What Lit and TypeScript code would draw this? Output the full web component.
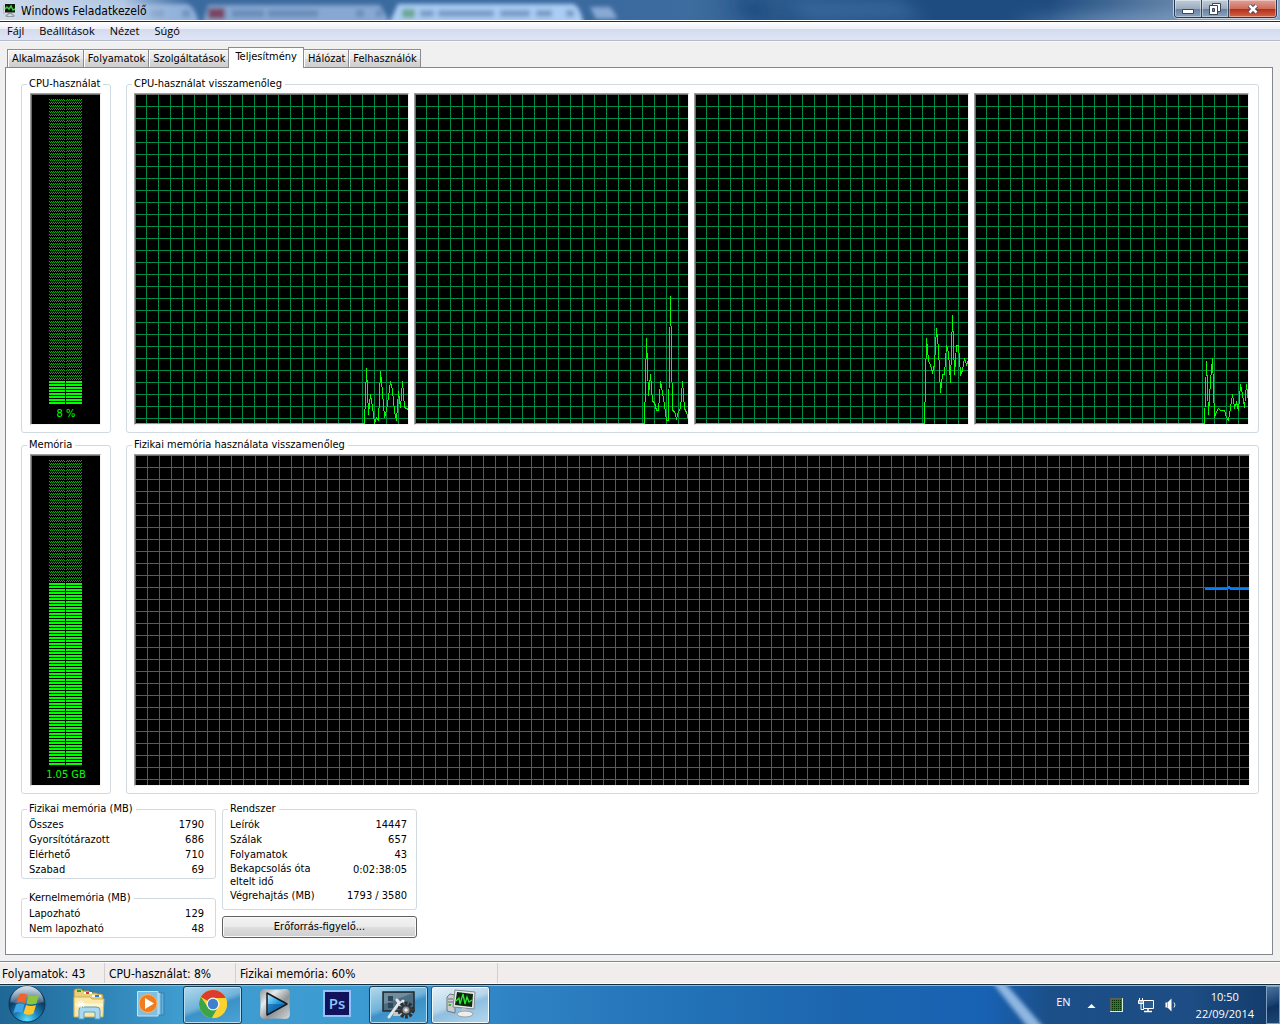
import { LitElement, html, css, svg } from "lit";
import { customElement, property, state } from "lit/decorators.js";
import { classMap } from "lit/directives/class-map.js";

const TABS = [
  "Alkalmazások",
  "Folyamatok",
  "Szolgáltatások",
  "Teljesítmény",
  "Hálózat",
  "Felhasználók",
];

// one sample every two pixels, newest at the right edge
const CPU_HISTORY = [
  [1, 56, 10, 30, 18, 1, 7, 4, 53, 32, 7, 14, 28, 43, 34, 13, 4, 33, 17, 43, 17, 16, 15],
  [1, 86, 29, 50, 23, 22, 14, 14, 43, 32, 20, 4, 4, 128, 14, 13, 6, 13, 16, 43, 16, 12, 5],
  [1, 86, 64, 59, 52, 60, 96, 76, 32, 50, 50, 79, 72, 42, 109, 50, 79, 79, 50, 54, 66, 60, 64],
  [1, 63, 10, 44, 66, 7, 13, 16, 14, 14, 14, 7, 4, 17, 30, 17, 22, 14, 40, 30, 17, 40, 22],
];

const MEMORY_HISTORY = [
  196, 196, 196, 196, 196, 196, 196, 196, 196, 196, 196, 196, 198, 196, 196, 196,
  196, 196, 196, 196, 196, 196, 196,
];

const PHYSICAL = [
  ["Összes", "1790"],
  ["Gyorsítótárazott", "686"],
  ["Elérhető", "710"],
  ["Szabad", "69"],
];

const KERNEL = [
  ["Lapozható", "129"],
  ["Nem lapozható", "48"],
];

const SYSTEM = [
  ["Leírók", "14447"],
  ["Szálak", "657"],
  ["Folyamatok", "43"],
  ["Bekapcsolás óta eltelt idő", "0:02:38:05"],
  ["Végrehajtás (MB)", "1793 / 3580"],
];

@customElement("history-chart")
export class HistoryChart extends LitElement {
  static styles = css`
    :host {
      display: flex;
      min-width: 0;
      background: #000;
      border: 1px solid;
      border-color: #a0a0a0 #f4f4f4 #f4f4f4 #a0a0a0;
    }
    svg.plot {
      flex: 1;
      width: 100%;
      min-width: 0;
      border: solid #696969;
      border-width: 1px 0 0 1px;
      shape-rendering: crispEdges;
    }
    .cpu {
      fill: none;
      stroke: #00ff00;
    }
    .memory {
      fill: none;
      stroke: #0080ff;
      stroke-width: 2;
    }
  `;

  @property({ type: Array }) samples: number[] = [];
  @property() kind = "cpu";
  @property({ type: Number }) shift = 10;
  @property() label = "";

  get points() {
    const n = this.samples.length;
    const half = this.kind === "cpu" ? 0.5 : 0;
    const points = this.samples.map(
      (v, i) => `${(i - n + 1) * 2 + half},${half - v}`
    );
    if (this.kind === "cpu") points.unshift(`-4000,${-half}`);
    return points.join(" ");
  }

  render() {
    return html`
      <svg class="plot" role="img" aria-label=${this.label}>
        <defs>
          <pattern
            id="grid"
            x=${this.shift}
            y="11"
            width="12"
            height="12"
            patternUnits="userSpaceOnUse"
          >
            <path d="M0 0H12V1H1V12H0Z" fill="#008c46" />
          </pattern>
        </defs>
        <rect width="100%" height="100%" fill="url(#grid)" />
        <svg x="100%" y="100%" width="1" height="1" overflow="visible">
          <polyline class=${this.kind} points=${this.points} />
        </svg>
      </svg>
    `;
  }
}

@customElement("level-meter")
export class LevelMeter extends LitElement {
  static styles = css`
    :host {
      display: flex;
      flex-direction: column;
      align-items: center;
      background: #000;
      border: 1px solid;
      border-color: #a0a0a0 #f4f4f4 #f4f4f4 #a0a0a0;
      box-shadow: inset 1px 1px #696969;
      padding: 5px 0 0 1px;
    }
    svg {
      width: 34px;
      height: 306px;
      shape-rendering: crispEdges;
    }
    span {
      color: #00ff00;
      font-size: 11px;
      line-height: 18px;
    }
  `;

  static bars = 102;

  @property({ type: Number }) lit = 0;
  @property() text = "";

  render() {
    const dim = (LevelMeter.bars - this.lit) * 3;
    return html`
      <svg aria-hidden="true">
        <defs>
          <pattern id="dim" width="2" height="3" patternUnits="userSpaceOnUse">
            <path d="M0 0H1V1H0ZM1 1H2V2H1Z" fill="#00b400" />
          </pattern>
          <pattern id="lit" width="2" height="3" patternUnits="userSpaceOnUse">
            <path d="M0 0H2V2H0Z" fill="#00ff00" />
          </pattern>
        </defs>
        <rect width="33" height=${dim} fill="url(#dim)" />
        <rect y=${dim} width="33" height=${this.lit * 3} fill="url(#lit)" />
        <rect x="16" width="1" height="306" fill="#000" />
      </svg>
      <span>${this.text}</span>
    `;
  }
}

@customElement("task-bar")
export class TaskBar extends LitElement {
  static styles = css`
    :host {
      display: flex;
      position: relative;
      height: 38px;
      border-top: 1px solid #12303f;
      box-shadow: inset 0 1px #86bfe0;
      padding-top: 1px;
      color: #fff;
      background: linear-gradient(
        90deg,
        #1f6795 0,
        #2a7cae 6%,
        #3f9ccf 14%,
        #3c9bd2 28%,
        #2f83c4 40%,
        #2374b9 52%,
        #1c65ae 66%,
        #1862b4 77%,
        #1b4f88 82%,
        #1d4d84 93%,
        #123a69 100%
      );
    }
    .streak {
      position: absolute;
      right: 210px;
      top: 1px;
      width: 80px;
      height: 38px;
    }
    button {
      display: flex;
      align-items: center;
      justify-content: center;
      width: 59px;
      padding: 0 0 2px;
      border: 1px solid transparent;
      border-radius: 3px;
      background: none;
    }
    .start {
      width: 56px;
      padding-right: 2px;
    }
    .apps {
      display: flex;
      gap: 3px;
    }
    .open {
      border-color: #12405f;
      box-shadow: inset 0 0 0 1px #b8dcf0;
      background: linear-gradient(160deg, #b4d9ec 0, #70b3d9 45%, #3c92c8 55%, #4ba3d4 100%);
    }
    .active {
      border-color: #2a5b82;
      box-shadow: inset 0 0 0 1px #f2fafd;
      background: linear-gradient(160deg, #e6f2f8 0, #b6d6ea 45%, #8fbfe0 55%, #b4d8ee 100%);
    }
    .tray {
      display: flex;
      align-items: center;
      margin-left: auto;
      font-family: "Open Sans", "DejaVu Sans Condensed", sans-serif;
      font-size: 11px;
    }
    .tray svg {
      display: block;
    }
    .lang {
      margin-right: 16px;
      padding-bottom: 6px;
    }
    .arrow {
      margin-right: 14px;
    }
    .cpu {
      margin-right: 15px;
    }
    .net {
      margin-right: 10px;
    }
    .clock {
      margin: 0 12px 0 17px;
      line-height: 17px;
      text-align: center;
    }
    .desktop {
      align-self: stretch;
      width: 14px;
      border: 1px solid #7f9fbe;
      border-radius: 0;
      background: linear-gradient(160deg, #4a739c, #1b4475 45%, #0f3360 55%, #1c4675);
    }
  `;

  render() {
    return html`
      <svg class="streak" viewBox="0 0 80 38" aria-hidden="true">
        <defs>
          <filter id="soft"><feGaussianBlur stdDeviation="2" /></filter>
        </defs>
        <path d="M2 -4L14 -4L56 44L40 44Z" fill="#a4c8ee" opacity=".85" filter="url(#soft)" />
      </svg>
      <div class="apps">
        <button class="start" aria-label="Start">
          <svg width="38" height="38" viewBox="0 0 38 38">
            <defs>
              <radialGradient id="orb" cx=".5" cy=".95" r=".9">
                <stop offset="0" stop-color="#5fe0ff" />
                <stop offset=".35" stop-color="#1c86bd" />
                <stop offset=".7" stop-color="#0d3c66" />
                <stop offset="1" stop-color="#3b6d92" />
              </radialGradient>
              <linearGradient id="gloss" x2="0" y2="1">
                <stop offset="0" stop-color="#fff" stop-opacity=".8" />
                <stop offset="1" stop-color="#fff" stop-opacity=".15" />
              </linearGradient>
            </defs>
            <circle cx="19" cy="19" r="18" fill="url(#orb)" stroke="#0e3450" />
            <path d="M2.500 17a16.500 16 0 0 1 33 0Q19 22 2.500 17Z" fill="url(#gloss)" />
            <path d="M11 9.500Q14 7.500 19 9.500L17 18Q12 16 8.500 18Z" fill="#f0642c" />
            <path d="M20.500 10Q25 12 31 10L28.500 18.500Q23 20.500 18.500 18.500Z" fill="#8cc63e" />
            <path d="M8 19.500Q12 17.500 16.500 19.500L14 28Q10 26 5.500 28Z" fill="#3ea6e8" />
            <path d="M18 20Q23 22 28 20L25.500 28.500Q21 31 15.500 28.500Z" fill="#fdc72f" />
          </svg>
        </button>
        <button aria-label="Windows Intéző">
          <svg width="34" height="32" viewBox="0 0 34 32">
            <path d="M2 3Q2 1 4 1H9L11 3H17L18 5H24L26 6H29Q31 6 31 8V28H2Z" fill="#e9cf7c" stroke="#b28d35" />
            <path d="M5 2H9V4H5Z" fill="#25a03b" />
            <path d="M12 4H20V6H12Z" fill="#fff" />
            <path d="M14 4H17V6H14Z" fill="#d33b2a" />
            <path d="M20 7H29V9H20Z" fill="#fff" />
            <path d="M23 7H27V9H23Z" fill="#2b7fd0" />
            <path d="M2 9H18L20 11H32L31 29H2Z" fill="#f8e9a8" stroke="#cfae58" />
            <path d="M3 17H31" stroke="#fff6cf" stroke-width="3" />
            <path d="M7 31V22Q7 19 10 19H24Q28 19 28 22V31H23V24H12V31Z" fill="#a9d9f0" stroke="#5a9fc8" />
            <path d="M9 12V20M5 16H13M6 13L12 19M12 13L6 19" stroke="#fff" stroke-width="1" />
          </svg>
        </button>
        <button aria-label="Windows Media Player">
          <svg width="30" height="28" viewBox="0 0 30 28">
            <path d="M9 3H28V25H9Z" fill="#5fb0da" stroke="#2d7caf" />
            <path d="M6 2.500H25V25H6Z" fill="#9ad0ea" stroke="#3b89b8" />
            <path d="M1.500 1.500H22V26H1.500Z" fill="#7fbfe2" stroke="#c4e4f3" />
            <circle cx="12" cy="13.500" r="9" fill="#f07c1e" stroke="#fbb36b" />
            <path d="M9 8L18 13.500L9 19Z" fill="#fff" />
          </svg>
        </button>
        <button class="open" aria-label="Google Chrome">
          <svg width="30" height="30" viewBox="0 0 30 30">
            <circle cx="15" cy="15" r="14" fill="#fcd32c" />
            <path d="M15 15L2.900 8A14 14 0 0 1 27.600 9H15Z" fill="#dc3c2c" />
            <path d="M2.900 8A14 14 0 0 0 14 29L20.200 18L15 15L9.800 18Z" fill="#3aa548" />
            <path d="M15 9H27.600A14 14 0 0 1 14 29L20.200 18Z" fill="#fcd32c" />
            <circle cx="15" cy="15" r="6.500" fill="#f4f4f0" />
            <circle cx="15" cy="15" r="5.200" fill="#3f7fcc" />
          </svg>
        </button>
        <button aria-label="Lejátszó">
          <svg width="32" height="32" viewBox="0 0 32 32">
            <defs>
              <linearGradient id="steel" x2="1" y2="1">
                <stop offset="0" stop-color="#8c9296" />
                <stop offset=".3" stop-color="#e8eaea" />
                <stop offset=".6" stop-color="#8e9498" />
                <stop offset="1" stop-color="#d6d8d8" />
              </linearGradient>
              <linearGradient id="play" x2="1" y2="1">
                <stop offset="0" stop-color="#bdefff" />
                <stop offset=".5" stop-color="#1c9ce0" />
                <stop offset="1" stop-color="#0b5ea8" />
              </linearGradient>
            </defs>
            <path d="M6 1Q16 2 26 1Q31 1 31 6Q30 16 31 26Q31 31 26 31Q16 30 6 31Q1 31 1 26Q2 16 1 6Q1 1 6 1Z" fill="url(#steel)" />
            <path d="M8 5L28 16L8 27Z" fill="url(#play)" stroke="#14181c" stroke-width="1.500" stroke-linejoin="round" />
            <path d="M9 16H26L9 25.500Z" fill="#0a4f93" opacity=".55" />
          </svg>
        </button>
        <button aria-label="Photoshop">
          <svg width="30" height="28" viewBox="0 0 30 28">
            <rect x="1" width="28" height="27" fill="#8fc3f8" />
            <rect x="3" y="2" width="24" height="23" fill="#11125c" />
            <text x="15" y="19" text-anchor="middle" font-family="Open Sans, sans-serif" font-size="15" font-weight="600" fill="#8ec5fa">Ps</text>
          </svg>
        </button>
        <button class="open" aria-label="Beállítások">
          <svg width="34" height="30" viewBox="0 0 34 30">
            <path d="M1 3H32V22H1Z" fill="#4d6c80" stroke="#1f2a30" stroke-width="1.500" />
            <path d="M2 4H31L2 15Z" fill="#86a5b6" opacity=".6" />
            <path d="M6 7H11V12H6ZM6 14H11V19H6Z" fill="#2d4657" />
            <path d="M12 23H20L21 27H11Z" fill="#c4c8ca" />
            <path d="M7 28L17 14M15 11L18 15L21 12" fill="none" stroke="#e3e6e8" stroke-width="3" stroke-linecap="round" />
            <circle cx="24" cy="21" r="6" fill="none" stroke="#2c3033" stroke-width="5" stroke-dasharray="2.500 1.270" />
            <circle cx="24" cy="21" r="4.500" fill="#8b9194" stroke="#33383b" stroke-width="2" />
            <circle cx="24" cy="21" r="1.800" fill="#e9ecec" />
          </svg>
        </button>
        <button class="active" aria-label="Windows Feladatkezelő">
          <svg width="32" height="30" viewBox="0 0 32 30">
            <path d="M2 8L5 5L10 6V24L2 22Z" fill="#c9cdd0" stroke="#6f777c" />
            <path d="M3 10H8M3 13H8" stroke="#697176" />
            <path d="M3.500 16H6" stroke="#4db32e" stroke-width="2" />
            <path d="M10 1L30 3L29 20L8 18Z" fill="#e8ebec" stroke="#80888c" />
            <path d="M12 3L28 5L27 18L10 16Z" fill="#0c2a10" />
            <path d="M11 12L14 9L15 15L18 5L20 15L22 8L24 13L27 11" fill="none" stroke="#2eea34" stroke-width="1.300" />
            <path d="M17 19L22 20L21 24L16 23Z" fill="#c3c8ca" />
            <ellipse cx="20" cy="25" rx="8" ry="3" fill="#eceeee" stroke="#98a0a4" />
          </svg>
        </button>
      </div>
      <div class="tray">
        <span class="lang">EN</span>
        <svg class="arrow" width="9" height="8" viewBox="0 0 9 8" aria-hidden="true">
          <path d="M.5 7L4.500 3L8.500 7Z" fill="#fff" />
        </svg>
        <svg class="cpu" width="13" height="14" viewBox="0 0 13 14" aria-hidden="true">
          <defs>
            <pattern id="dots" width="2" height="2" patternUnits="userSpaceOnUse">
              <rect width="2" height="2" fill="#009800" />
              <rect width="1" height="1" fill="#003000" />
            </pattern>
          </defs>
          <rect width="13" height="14" fill="#d8ecd8" />
          <rect width="12" height="13" fill="#5a5f5a" />
          <rect x="1" y="1" width="11" height="12" fill="url(#dots)" />
        </svg>
        <svg class="net" width="17" height="16" viewBox="0 0 17 16" aria-hidden="true">
          <path d="M5.500 3.500H15.500V11.500H5.500Z" fill="#2a5b8c" stroke="#fff" />
          <path d="M10 12V14M6 14.500H14" stroke="#fff" stroke-width="1.500" fill="none" />
          <path d="M1.500 1V3M4.500 1V3" stroke="#fff" />
          <path d="M.5 3.500H5.500V6.500H.5Z" fill="#9db5cc" stroke="#fff" />
          <path d="M3 7V12.500H6" stroke="#fff" fill="none" />
        </svg>
        <svg width="14" height="16" viewBox="0 0 14 16" aria-hidden="true">
          <path d="M.5 5.500H2.500L6.500 1.500V14.500L2.500 10.500H.5Z" fill="#fff" />
          <path d="M2.500 5.500V10.500" stroke="#8fa8c0" />
          <path d="M9 5.500Q11 8 9 10.500" stroke="#dfe9f2" fill="none" />
        </svg>
        <div class="clock">10:50<br />22/09/2014</div>
        <button class="desktop" aria-label="Asztal megjelenítése"></button>
      </div>
    `;
  }
}

@customElement("app-root")
export class AppRoot extends LitElement {
  static styles = css`
    :host {
      display: flex;
      flex-direction: column;
      min-height: 100vh;
      background: #f0f0f0;
      color: #000;
      font: 11px/14px "DejaVu Sans Condensed", "Noto Sans", sans-serif;
    }
    button {
      font: inherit;
      color: inherit;
    }
    header {
      position: relative;
      display: flex;
      align-items: center;
      height: 20px;
      padding-left: 3px;
      background: linear-gradient(90deg, #3b6a9f 0, #3b6a9f 48%, #3d6c9f 54%, #265487 62%, #1f4c80 70%, #1f4c80 82%, #6484a8 92%, #8ba6c4 100%);
      border-bottom: 1px solid #fff;
      box-shadow: 0 1px #1c2b4a;
      font-size: 12px;
    }
    .glass {
      position: absolute;
      inset: 0;
      width: 100%;
      height: 20px;
    }
    .icon {
      position: relative;
      margin-right: 4px;
    }
    h1 {
      position: relative;
      margin: 0;
      padding-top: 2px;
      font-size: 12px;
      font-weight: normal;
    }
    .controls {
      position: relative;
      align-self: flex-start;
      display: flex;
      margin: 0 3px 0 auto;
      border: 1px solid #27384e;
      border-top: 0;
      border-radius: 0 0 4px 4px;
      box-shadow: 0 0 0 1px #c3d0de;
      overflow: hidden;
    }
    .controls button {
      display: flex;
      align-items: center;
      justify-content: center;
      width: 27px;
      height: 17px;
      padding: 0;
      border: 0;
      border-right: 1px solid #32465f;
      background: linear-gradient(#c1cddb, #9aabc0 50%, #66809e 52%, #8ba3bd);
      box-shadow: inset 0 0 0 1px #ffffff66;
    }
    .controls .close {
      width: 47px;
      border-right: 0;
      background: linear-gradient(#e0a197, #cf6d5c 50%, #b02c14 52%, #d4644a);
    }
    nav {
      display: flex;
      gap: 15px;
      height: 18px;
      margin-top: 1px;
      padding: 0 7px;
      border-bottom: 1px solid #b6bccc;
      box-shadow: 0 1px #f8f8fa;
      background: linear-gradient(#fff, #edf0f8 38%, #d4dbed 40%, #dfe5f5);
      font-family: "Open Sans", "DejaVu Sans Condensed", sans-serif;
      line-height: 18px;
    }
    nav button {
      padding: 0;
      border: 0;
      background: none;
    }
    main {
      flex: 1;
      display: flex;
      flex-direction: column;
      padding: 6px 7px 7px 5px;
    }
    .tabs {
      display: flex;
      align-items: flex-end;
      height: 20px;
      padding-left: 2px;
    }
    .tabs button {
      height: 18px;
      margin-right: -1px;
      padding: 0 3px 0 4px;
      border: 1px solid #898c95;
      border-bottom: 0;
      background: linear-gradient(#f3f3f3, #ebebeb 50%, #dddddd 52%, #cdcdcd);
      box-shadow: inset 1px 1px #fff;
    }
    .tabs .selected {
      position: relative;
      z-index: 1;
      height: 21px;
      margin-bottom: -1px;
      padding: 0 6px 2px;
      background: #fff;
    }
    .panel {
      flex: 1;
      display: grid;
      grid-template-columns: 90px 1fr;
      grid-template-rows: 1fr 1fr auto;
      column-gap: 15px;
      row-gap: 5px;
      padding: 9px 13px 16px 15px;
      border: 1px solid #828790;
      background: #fff;
    }
    fieldset {
      display: flex;
      min-width: 0;
      margin: 0;
      padding: 2px 9px 7px 8px;
      border: 1px solid #d0dae0;
      border-radius: 3px;
    }
    legend {
      height: 14px;
      margin-left: -3px;
      padding: 0 3px 0 2px;
      white-space: nowrap;
    }
    level-meter,
    history-chart {
      flex: 1;
    }
    .history {
      gap: 5px;
      padding: 2px 9px 7px 7px;
    }
    .history.wide {
      padding-right: 8px;
    }
    .history legend {
      margin-left: -2px;
    }
    .stats {
      grid-column: 1 / -1;
      display: grid;
      grid-template-columns: 195px 195px;
      gap: 6px;
      padding-top: 3px;
    }
    .stack {
      display: flex;
      flex-direction: column;
      justify-content: space-between;
      gap: 12px;
    }
    .stack.tight {
      gap: 6px;
    }
    .stack fieldset {
      padding: 1px 11px 1px 7px;
    }
    .tight fieldset {
      flex: 1;
      padding-right: 9px;
    }
    .stack legend {
      margin-left: -2px;
    }
    table {
      flex: 1;
      align-self: flex-start;
      border-collapse: collapse;
    }
    th,
    td {
      padding: 0;
      vertical-align: top;
      font-weight: normal;
      line-height: 15px;
      text-align: left;
    }
    td {
      text-align: right;
      white-space: nowrap;
    }
    .wrap th {
      width: 100px;
      line-height: 13px;
      padding-right: 20px;
    }
    .monitor {
      height: 22px;
      padding: 0;
      border: 1px solid #606060;
      border-radius: 3px;
      box-shadow: inset 0 0 0 1px #fafafa;
      background: linear-gradient(#f2f2f2, #ebebeb 50%, #dddddd 52%, #cfcfcf);
    }
    footer {
      display: flex;
      height: 20px;
      border: solid #fff;
      border-width: 1px 0;
      box-shadow: 0 -1px #85858a;
      background: #f1edec;
      font-size: 12px;
      line-height: 22px;
    }
    footer span {
      box-sizing: border-box;
      width: 131px;
      padding-left: 4px;
      border-right: 1px solid #d2cfce;
    }
    footer span:first-child {
      width: 105px;
      padding-left: 2px;
    }
    footer span:last-child {
      width: 262px;
    }
  `;

  @state() selected = 3;

  rows(data: string[][]) {
    return html`<table>
      <tbody>
        ${data.map(
          ([name, value]) => html`
            <tr class=${classMap({ wrap: name.length > 20 })}>
              <th scope="row">${name}</th>
              <td>${value}</td>
            </tr>
          `
        )}
      </tbody>
    </table>`;
  }

  // browser tabs showing through the glass title bar
  glass() {
    return html`<svg class="glass" aria-hidden="true">
      <defs>
        <filter id="blur" x="-5%" y="-50%" width="110%" height="200%">
          <feGaussianBlur stdDeviation="2" />
        </filter>
        <filter id="smear" x="-20%" width="140%">
          <feGaussianBlur stdDeviation="8" />
        </filter>
        <linearGradient id="glow">
          <stop offset="0" stop-color="#cddbeb" />
          <stop offset=".65" stop-color="#bccfe8" stop-opacity=".9" />
          <stop offset="1" stop-color="#9ab8de" stop-opacity="0" />
        </linearGradient>
      </defs>
      <g filter="url(#blur)">
        <path d="M-10 26V4H186Q194 4 200 26Z" fill="#8fb0da" />
        <path d="M202 26L208 5H380L392 26Z" fill="#86a8d2" />
        <path d="M388 26L398 4H572Q580 4 584 26Z" fill="#abcdf4" />
        <path d="M590 7H610Q616 14 617 19H596Z" fill="#88a9d4" />
        <rect x="208" y="8" width="17" height="11" fill="#7c4564" />
        <rect x="402" y="9" width="13" height="9" fill="#6ba790" />
        ${[[150, 14], [182, 8], [232, 32], [268, 50], [356, 8], [376, 6], [420, 14], [438, 56], [500, 30], [536, 16], [566, 8]].map(
          ([x, w]) => svg`<rect x=${x} y="10" width=${w} height="7" fill="#5a7aa8" opacity=".6" />`
        )}
      </g>
      <rect width="190" height="20" fill="url(#glow)" />
      <g filter="url(#smear)">
        <path d="M730 0H760L775 20H750Z" fill="#1d4b80" />
        <path d="M780 0H900L925 20H810Z" fill="#4377ab" opacity=".6" />
        <path d="M1010 24Q1080 16 1180 18H1280V24Z" fill="#9cbde4" />
      </g>
    </svg>`;
  }

  render() {
    return html`
      <header>
        ${this.glass()}
        <svg class="icon" width="14" height="14" viewBox="0 0 14 14" aria-hidden="true">
          <path d="M0 2H2V11H0Z" fill="#b9bdc0" />
          <path d="M1.500 .5H12.500V10H1.500Z" fill="#10180f" stroke="#d9dcdc" />
          <path d="M2 6L4 4L6 6L8 3L10 7L12 6" fill="none" stroke="#35d23b" stroke-width="1.500" />
          <path d="M5 10.500H9V12H11V13.500H3V12H5Z" fill="#d3d7d9" stroke="#565c60" stroke-width=".5" />
        </svg>
        <h1>Windows Feladatkezelő</h1>
        <div class="controls">
          <button aria-label="Kis méret">
            <svg width="12" height="14" viewBox="0 0 12 14">
              <path d="M.5 7.500H11.500V11.500H.5Z" fill="#fff" stroke="#3c4657" />
            </svg>
          </button>
          <button aria-label="Előző méret">
            <svg width="12" height="14" viewBox="0 0 12 14">
              <path d="M3.500 1.500H11.500V9.500H3.500Z" fill="#fff" stroke="#3c4657" />
              <path d="M.5 3.500H8.500V12.500H.5Z" fill="#fff" stroke="#3c4657" />
              <path d="M3.500 6.500H5.500V9.500H3.500Z" fill="#7d93ae" stroke="#3c4657" />
            </svg>
          </button>
          <button class="close" aria-label="Bezárás">
            <svg width="14" height="14" viewBox="0 0 14 14">
              <path d="M3.500 3.500L10.500 10.500M10.500 3.500L3.500 10.500" stroke="#3c4657" stroke-width="4.500" />
              <path d="M3.500 3.500L10.500 10.500M10.500 3.500L3.500 10.500" stroke="#fff" stroke-width="2.500" />
            </svg>
          </button>
        </div>
      </header>
      <nav>
        ${["Fájl", "Beállítások", "Nézet", "Súgó"].map((m) => html`<button>${m}</button>`)}
      </nav>
      <main>
        <div class="tabs" role="tablist">
          ${TABS.map(
            (tab, i) => html`<button
              role="tab"
              aria-selected=${i === this.selected}
              class=${classMap({ selected: i === this.selected })}
              @click=${() => (this.selected = i)}
            >
              ${tab}
            </button>`
          )}
        </div>
        <div class="panel" role="tabpanel">
          <fieldset>
            <legend>CPU-használat</legend>
            <level-meter lit="8" text="8 %"></level-meter>
          </fieldset>
          <fieldset class="history">
            <legend>CPU-használat visszamenőleg</legend>
            ${CPU_HISTORY.map(
              (samples, i) => html`<history-chart
                .samples=${samples}
                label="CPU ${i}"
              ></history-chart>`
            )}
          </fieldset>
          <fieldset>
            <legend>Memória</legend>
            <level-meter lit="61" text="1.05 GB"></level-meter>
          </fieldset>
          <fieldset class="history wide">
            <legend>Fizikai memória használata visszamenőleg</legend>
            <history-chart
              kind="memory"
              shift="11"
              .samples=${MEMORY_HISTORY}
              label="Memória"
            ></history-chart>
          </fieldset>
          <div class="stats">
            <div class="stack">
              <fieldset>
                <legend>Fizikai memória (MB)</legend>
                ${this.rows(PHYSICAL)}
              </fieldset>
              <fieldset>
                <legend>Kernelmemória (MB)</legend>
                ${this.rows(KERNEL)}
              </fieldset>
            </div>
            <div class="stack tight">
              <fieldset>
                <legend>Rendszer</legend>
                ${this.rows(SYSTEM)}
              </fieldset>
              <button class="monitor">Erőforrás-figyelő...</button>
            </div>
          </div>
        </div>
      </main>
      <footer>
        <span>Folyamatok: 43</span>
        <span>CPU-használat: 8%</span>
        <span>Fizikai memória: 60%</span>
      </footer>
      <task-bar></task-bar>
    `;
  }
}
